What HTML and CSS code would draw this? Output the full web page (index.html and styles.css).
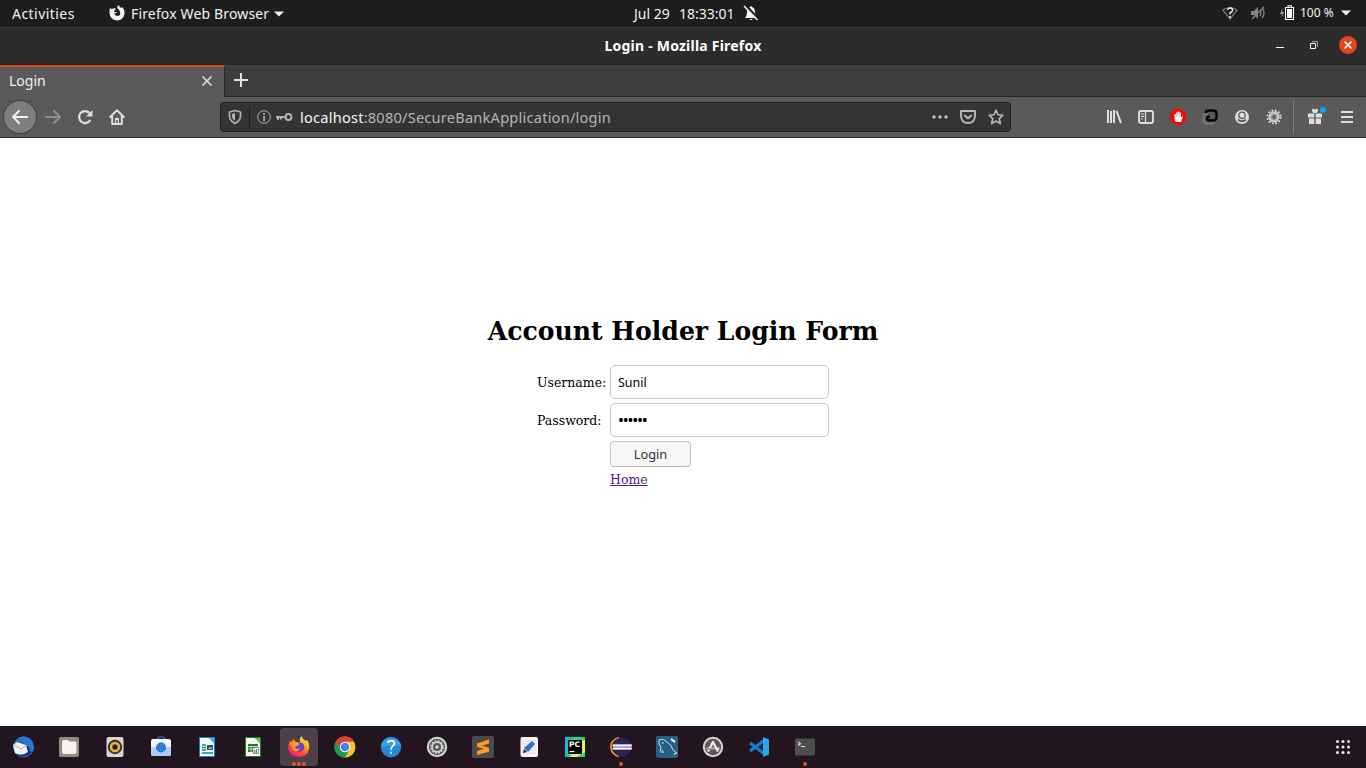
FILE: index.html
```html
<!DOCTYPE html>
<html lang="en">
<head>
<meta charset="utf-8">
<title>Login</title>
<link rel="stylesheet" href="styles.css">
</head>
<body>
<header class="panel">
  <span class="activities">Activities</span>
  <svg class="panel-fox" width="16" height="16" viewBox="0 0 16 16"><path fill="#f2f2f2" fill-rule="evenodd" d="M1 3Q3 5 5 3L7 4Q5 5 5 7H8Q7 9 5 8Q6 11 9 11Q12 10 11 7Q10 4 8 3Q8 1 10 0Q10 2 12 3L13 2Q16 5 15.500 9Q14 15.500 8 15.500Q1 15 .500 8Q.300 5 1 3Z"/></svg>
  <span class="app-name">Firefox Web Browser</span>
  <svg class="caret" width="10" height="6" viewBox="0 0 10 6"><path fill="#f2f2f2" d="M0 .5h10L5 5.500Z"/></svg>
  <div class="clock"><span class="date">Jul 29</span><span class="time">18:33:01</span></div>
  <svg class="bell" width="16" height="16" viewBox="0 0 16 16"><path fill="#f2f2f2" d="M2 13q2-2 2-6Q4 3 7 2q1-2 2 0q3 1 3 5q0 4 2 6ZM6 14h4q-2 2-4 0"/><path stroke="#1d1d1d" stroke-width="3" d="M2 0l14 15"/><path stroke="#f2f2f2" stroke-width="1.600" d="M1 1l13.500 14"/></svg>
  <div class="status">
    <svg class="wifi" width="16" height="16" viewBox="0 0 16 16"><path fill="none" stroke="#858585" stroke-width="1.200" d="M1 5q7-5 14 0L8 14Z"/><path fill="none" stroke="#eee" stroke-width="1.500" d="M5.500 5Q6 3 8 3q3 0 2.500 2.500Q10 7 8 8v1.500M8 11v2"/></svg>
    <svg class="mute" width="16" height="16" viewBox="0 0 16 16"><path fill="#858585" d="M1 6h3l4-4v12l-4-4H1Z"/><path fill="none" stroke="#858585" stroke-width="1.300" d="M2 14L14 2M10 5q2 3 0 6M12 3q4 5 0 10"/></svg>
    <svg class="battery" width="16" height="16" viewBox="0 0 16 16"><path fill="#999" d="M3.500 3L1 9h2l-.5 4L5 7H3.200Z"/><path fill="none" stroke="#fff" stroke-width="1.100" d="M6.500 2.500h8v12h-8ZM9 2V.7h3.500V2"/><path fill="#fff" d="M8 4h5v9H8Z"/></svg>
    <span class="percent">100 %</span>
    <svg width="10" height="6" viewBox="0 0 10 6"><path fill="#f2f2f2" d="M0 .5h10L5 5.500Z"/></svg>
  </div>
</header>
<div class="titlebar">
  <span class="window-title">Login - Mozilla Firefox</span>
  <div class="window-buttons">
    <svg width="8" height="10" viewBox="0 0 8 10"><path fill="#fff" d="M0 7h8v1H0Z"/></svg>
    <svg width="8" height="8" viewBox="0 0 8 8"><path fill="none" stroke="#fff" d="M.5 2.500h5v5h-5Z"/><path fill="none" stroke="#999" d="M2 .5h5.500V6"/></svg>
    <svg width="18" height="18" viewBox="0 0 18 18"><circle cx="9" cy="9" r="9" fill="#e2491a"/><path stroke="#fff" stroke-width="1.700" d="M5.500 5.500l7 7m0-7l-7 7"/></svg>
  </div>
</div>
<div class="tabs">
  <div class="tab"><span class="tab-title">Login</span><svg width="12" height="12" viewBox="0 0 12 12"><path stroke="#dedede" stroke-width="1.600" d="M1.500 1.500l9 9m0-9l-9 9"/></svg></div>
  <svg class="new-tab" width="14" height="14" viewBox="0 0 14 14"><path stroke="#e2e2e2" stroke-width="2" d="M7 0v14M0 7h14"/></svg>
</div>
<nav class="toolbar">
  <div class="nav-buttons">
    <div class="back"><svg width="18" height="16" viewBox="0 0 18 16"><path fill="none" stroke="#f2f2f2" stroke-width="2" stroke-linecap="round" stroke-linejoin="round" d="M8 2L2 8l6 6M2 8h14"/></svg></div>
    <svg class="forward" width="18" height="16" viewBox="0 0 18 16"><path fill="none" stroke="#8d8d8d" stroke-width="2" stroke-linecap="round" stroke-linejoin="round" d="M10 2l6 6-6 6M16 8H2"/></svg>
    <svg class="reload" width="16" height="16" viewBox="0 0 16 16"><path fill="none" stroke="#dedede" stroke-width="2.200" d="M13.300 11A6 6 0 1 1 12.500 4"/><path fill="#dedede" d="M15.500 1v6.500H9Z"/></svg>
    <svg class="home-icon" width="16" height="16" viewBox="0 0 16 16"><path fill="none" stroke="#dedede" stroke-width="2" stroke-linecap="round" stroke-linejoin="round" d="M1.200 8L8 1.200 14.800 8M3.200 7v8h9.600V7"/><path fill="#dedede" d="M6 9h4v6H8.800v-4H7.200v4H6Z"/></svg>
  </div>
  <div class="urlbar">
    <div class="shield"><svg width="14" height="16" viewBox="0 0 14 16"><path fill="none" stroke="#b2b2b2" stroke-width="1.700" stroke-linejoin="round" d="M7 1.500L12.500 3v4.500Q12 12 7 14.500Q2 12 1.500 7.500V3Z"/><path fill="#b2b2b2" d="M7 4v8Q4 10 4 7.500V5Z"/></svg></div>
    <svg class="info" width="14" height="14" viewBox="0 0 14 14"><circle cx="7" cy="7" r="6.300" fill="none" stroke="#b2b2b2"/><path fill="#b2b2b2" d="M6.200 3h1.700v1.700H6.200ZM6.200 6h1.700v5H6.200Z"/></svg>
    <svg class="key" width="18" height="10" viewBox="0 0 18 10"><circle cx="12.500" cy="5" r="2.900" fill="none" stroke="#b2b2b2" stroke-width="2"/><path fill="none" stroke="#b2b2b2" stroke-width="2" d="M0 5h10M2 5v3M5 5v2.500"/></svg>
    <span class="url"><b>localhost</b>:8080/SecureBankApplication/login</span>
    <div class="url-actions">
      <svg width="16" height="16" viewBox="0 0 16 16"><g fill="#b9b9b9"><circle cx="2" cy="8" r="1.800"/><circle cx="8" cy="8" r="1.800"/><circle cx="14" cy="8" r="1.800"/></g></svg>
      <svg width="16" height="16" viewBox="0 0 16 16"><path fill="none" stroke="#b9b9b9" stroke-width="1.900" stroke-linejoin="round" d="M1 2h14v5Q14.500 14 8 14Q1.500 14 1 7Z"/><path fill="none" stroke="#b9b9b9" stroke-width="1.900" stroke-linecap="round" d="M4.800 6.500L8 9.500l3.200-3"/></svg>
      <svg width="16" height="16" viewBox="0 0 16 16"><path fill="none" stroke="#b9b9b9" stroke-width="1.600" stroke-linejoin="round" d="M8 1l2 4.800 5 .4-3.800 3.400 1.200 5L8 12l-4.400 2.600 1.200-5L1 6.200l5-.4Z"/></svg>
    </div>
  </div>
  <div class="extensions">
    <svg width="16" height="16" viewBox="0 0 16 16"><path stroke="#dedede" stroke-width="2" d="M2 1v13M5 2v12M8 1v13M10.500 2l4.500 12"/></svg>
    <svg width="16" height="16" viewBox="0 0 16 16"><rect x="1" y="2" width="14" height="12" rx="2" fill="none" stroke="#dedede" stroke-width="1.900"/><path stroke="#dedede" stroke-width="1.200" d="M7.500 2v12M3 5h3M3 7.500h3M3 10h2"/></svg>
    <svg width="16" height="16" viewBox="0 0 16 16"><path fill="#e80c0c" d="M4.700 0h6.600L16 4.700v6.600L11.300 16H4.700L0 11.300V4.700Z"/><path fill="#fff" d="M4.500 5h1.300v3h.4V3.500h1.300V8h.3V2.500h1.400V8h.3V3.500h1.300v5L12.500 7v2L11 13H6.500Q4.300 12 4.500 9Z"/></svg>
    <svg width="16" height="16" viewBox="0 0 16 16"><path fill="none" stroke="#747476" stroke-width="2.500" d="M6 5H4Q1.500 5 1.500 8v3q0 3.500 3 3.500h4q3 0 3-2"/><path fill="none" stroke="#000" stroke-width="2.300" d="M3.500 4Q4 1.500 7 1.500h4q3.500 0 3.500 3.500v3Q14.500 11.500 11 11.500H8Q5 11.500 5 9.500 5 7.500 8 7.500"/></svg>
    <svg width="16" height="16" viewBox="0 0 16 16"><circle cx="8" cy="8" r="7" fill="#dedede"/><circle cx="8" cy="6.300" r="3.200" fill="none" stroke="#5a5a5a" stroke-width="1.300"/><path fill="none" stroke="#5a5a5a" stroke-width="1.700" d="M4 10.500Q8 14 12 10.500"/></svg>
    <svg width="16" height="16" viewBox="0 0 16 16"><circle cx="8" cy="8.500" r="7" fill="#3a3a3a"/><circle cx="8" cy="8" r="6.500" fill="none" stroke="#d6d6d6" stroke-width="2" stroke-dasharray="2 1.400"/><circle cx="8" cy="8" r="5.700" fill="#c6c6c6"/><circle cx="8" cy="8" r="3" fill="#8b8b8b"/><circle cx="8" cy="8" r="1.500" fill="#555"/></svg>
    <i class="separator"></i>
    <svg class="gift" width="20" height="20" viewBox="0 0 20 20"><path fill="#dedede" d="M1 6.500h6.300v4H1ZM8.700 6.500H15v4H8.700ZM2 11.500h5.300V17H2ZM8.700 11.500H14V17H8.700Z"/><path fill="none" stroke="#dedede" stroke-width="1.600" d="M8 5.500Q5 4.500 6 2.500q2 0 2 3Q8 2.500 10 2.500 11 4.500 8 5.500"/><circle cx="16" cy="3" r="3" fill="#00a9ee"/></svg>
    <svg class="menu" width="12" height="14" viewBox="0 0 12 14"><path stroke="#dedede" stroke-width="2" d="M0 2h12M0 7h12M0 12h12"/></svg>
  </div>
</nav>
<main class="page">
  <h1 class="heading">Account Holder Login Form</h1>
  <form class="form">
    <label class="label" for="user">Username:</label><input class="field" id="user" type="text" value="Sunil">
    <label class="label" for="pass">Password:</label><div class="field dots" id="pass">••••••</div>
    <button class="login" type="button">Login</button>
    <a class="home-link" href="#">Home</a>
  </form>
</main>
<footer class="dock">
  <div class="app"><svg viewBox="0 0 22 22"><circle cx="11.500" cy="11" r="10.500" fill="#1d60b5"/><path fill="#3d9be0" d="M7 4Q12-1 18 4q5 5 3 11Q17 5 7 4"/><path fill="#122b63" d="M2 16q8 8 17 1L15 9Z"/><path fill="#f4f4f6" d="M1 9l4-3 9 3 2 7q-6 5-13 1Z"/><path fill="none" stroke="#a9adb8" d="M2 9l7 4 6-4"/><path fill="#2a77cc" d="M4 6Q9 3 17 11l3 5Q24 5 15 1 7-1 4 6"/></svg></div>
  <div class="app"><svg viewBox="0 0 22 22"><rect x="1" y="1" width="20" height="20" rx="2" fill="#938b7b"/><path fill="#f4f3ef" d="M4 6q0-2 2-2h4l1.500 1.500H17q1.500 0 1.500 2V16q0 2-2 2H6q-2 0-2-2Z"/></svg></div>
  <div class="app"><svg viewBox="0 0 22 22"><rect x="2.500" y="1" width="17" height="20" rx="2" fill="#d8d5cd"/><circle cx="11" cy="11" r="7.200" fill="#303036"/><circle cx="11" cy="11" r="4" fill="none" stroke="#f0b72e" stroke-width="2.500"/><circle cx="11" cy="11" r="1.700" fill="#161616"/></svg></div>
  <div class="app"><svg viewBox="0 0 22 22"><path fill="none" stroke="#2f5ec0" stroke-width="1.500" d="M7 4q0-3 4-3t4 3"/><rect x="1" y="3" width="20" height="17" rx="2" fill="#f3f5fc"/><path fill="#b6c8f7" d="M1 11h20v7q0 2-2 2H3q-2 0-2-2Z"/><circle cx="11" cy="11.500" r="5" fill="#1876d2"/><path stroke="#79b6ef" stroke-width="1" stroke-dasharray="1 1.500" d="M7.500 9h7M7 11.500h8M7.500 14h7"/></svg></div>
  <div class="app"><svg viewBox="0 0 22 22"><path fill="#1888be" d="M3 1h16v20H3Z"/><path fill="#f8f9fa" d="M4 2h9l5 5v13H4Z"/><path fill="#44b6de" d="M13 2l5 5V2Z"/><path stroke="#177db2" stroke-width="1.400" d="M6 9h4M6 11.500h4M6 14h4M6 17h11"/><path fill="#22516e" d="M11 9h6v5h-6Z"/><path fill="#8fc7dd" d="M12 13l1.500-2 1 1 1-1 1 2Z"/></svg></div>
  <div class="app"><svg viewBox="0 0 22 22"><path fill="#18820b" d="M3 1h16v20H3Z"/><path fill="#fafafa" d="M4 2h9l5 5v13H4Z"/><path fill="#6bc73d" d="M13 2l5 5V2Z"/><path fill="#277b20" d="M6 8h10v8H6Z"/><path stroke="#d5ecd2" stroke-width=".8" d="M6 10.500h10M6 13h9M9 10v6"/><path fill="#fff" stroke="#777" stroke-width=".8" d="M11 11.500h5.500v6H11Z"/><path stroke="#c45b52" stroke-width="1.200" d="M12.800 17v-3"/><path stroke="#347dc8" stroke-width="1.200" d="M14.500 17v-4"/></svg></div>
  <div class="app active"><svg viewBox="0 0 22 22">
    <defs><linearGradient id="flame" x1=".8" y1="0" x2=".3" y2="1"><stop offset="0" stop-color="#fff044"/><stop offset=".4" stop-color="#ffaa16"/><stop offset=".7" stop-color="#ff493b"/><stop offset="1" stop-color="#e91b75"/></linearGradient></defs>
    <path fill="url(#flame)" d="M2 5l2 1 1-3 3 3h4q-1-4 2-6 0 3 4 5l1-1q3 4 2 9-2 8-10 8Q2 21 .500 13 0 8 2 5Z"/><circle cx="11.500" cy="11" r="4.800" fill="#6b45c7"/><path fill="#ff982c" d="M3 6q5-1 9 2l-3 2q-2 0-2 2 3 2 5 0-1 4-5 3-4-2-4-9Z"/></svg><i class="marks"><b></b><b></b><b></b></i></div>
  <div class="app"><svg viewBox="0 0 22 22"><circle cx="11" cy="11" r="10.500" fill="#fbc52c"/><path fill="#df4136" d="M1.900 5.700A10.500 10.500 0 0 1 20.100 5.700H11L6.500 13.600Z"/><path fill="#1b994f" d="M1.900 5.700L6.500 13.600 11 16.200 15.500 13.600 11 21.500A10.500 10.500 0 0 1 1.900 5.700"/><circle cx="11" cy="11" r="5.200" fill="#fff"/><circle cx="11" cy="11" r="4.200" fill="#3f83ee"/></svg></div>
  <div class="app"><svg viewBox="0 0 22 22"><circle cx="11" cy="11" r="10.300" fill="#2589cf"/><path fill="#3ca0df" d="M1 10A10.300 10.300 0 0 1 21 10Z"/><path fill="none" stroke="#fff" stroke-width="1.700" d="M7.800 7Q8 4.700 11 4.700q3.500 0 3.500 2.800 0 1.500-2 2.800Q11 11.500 11 14M11 15.800v2"/></svg></div>
  <div class="app"><svg viewBox="0 0 22 22"><circle cx="11" cy="11" r="9.200" fill="#595959" stroke="#d7d7d3" stroke-width="2"/><circle cx="11" cy="11" r="6" fill="none" stroke="#d6d6d2" stroke-width="1.600" stroke-dasharray="1.900 1.240"/><circle cx="11" cy="11" r="4.800" fill="none" stroke="#d6d6d2" stroke-width="1.500"/><circle cx="11" cy="11" r="1.800" fill="#d6d6d2"/></svg></div>
  <div class="app"><svg viewBox="0 0 22 22"><rect width="22" height="22" rx="1.500" fill="#4b4b4b"/><path fill="#ff9b20" d="M5 7.500L17 3.500v4L10 9.800l7 2v4L5 19v-4l7-2.300-7-2Z"/></svg></div>
  <div class="app"><svg viewBox="0 0 22 22"><rect x="2.500" y="1" width="17.500" height="20" rx="2" fill="#f5f5f5"/><path stroke="#ddd" d="M4 5h14M4 8h14M4 11h14M4 14h14M4 17h14"/><path fill="#376ad4" d="M14 5l3 3-7 8-4-4Z"/><path fill="#222" d="M6 13l-1 4 4-1Z"/></svg></div>
  <div class="app"><svg viewBox="0 0 22 22"><path fill="#21d789" d="M1 1h20v20H1Z"/><path fill="#06c5d5" d="M1 1h7L4 21H1Z"/><path fill="#e5f451" d="M14 5l7-1v12l-8 5H6Z"/><path fill="#000" d="M4 4h14v14H4Z"/><text class="pc" x="5" y="11.200">PC</text><path fill="#fff" d="M5.500 15h5v1.200h-5Z"/></svg></div>
  <div class="app"><svg viewBox="0 0 22 22"><path fill="none" stroke="#f59120" stroke-width="1.800" d="M9 1.500Q1 4 1 11t8 9.500"/><circle cx="12" cy="11" r="9.500" fill="#2c2255"/><path fill="#9792b9" d="M3 8h18.700v6H3Z"/><path stroke="#f4f2fa" stroke-width="1.300" d="M2.500 9.500h19.300M2.500 12.500h19.300"/></svg><i class="marks"><b></b></i></div>
  <div class="app"><svg viewBox="0 0 22 22"><rect width="22" height="22" rx="2" fill="#275f86"/><path fill="none" stroke="#d0dde5" stroke-width="1" d="M6 17q-3-3-1-6L3 8V4q5-2 8 2 5 3 6 8l4 3-3 1 1 1M6 14l2 3M7 6q-1 1 0 2"/><path stroke="#fff" stroke-width="2" d="M15 3l4 3"/></svg></div>
  <div class="app"><svg viewBox="0 0 22 22"><circle cx="11" cy="11" r="9.200" fill="#595959" stroke="#d7d7d3" stroke-width="2"/><path fill="none" stroke="#eee" stroke-width="2.300" stroke-linejoin="round" d="M6 15.500L11 6l5 9.500"/><path stroke="#eee" stroke-width="1.800" d="M4.500 12.500h13"/><path stroke="#a9449c" stroke-width="1.200" d="M5 13h8"/></svg></div>
  <div class="app"><svg viewBox="0 0 22 22"><path fill="none" stroke="#0e80cc" stroke-width="3.200" d="M2 7l14 10.500M2 15L16 4.500"/><path fill="#2aa5f0" d="M15 1l6 2.500v15L15 21Z"/></svg></div>
  <div class="app"><svg viewBox="0 0 22 22"><rect x="1" y="2.500" width="20" height="17" rx="1.500" fill="#4e4e4e"/><path fill="none" stroke="#e2e2e2" stroke-width="1.100" d="M4 6l2.500 1.700L4 9.500M7 10.500h4"/></svg><i class="marks"><b></b></i></div>
  <svg class="grid" width="14" height="14" viewBox="0 0 14 14"><g fill="#eee"><circle cx="1.500" cy="1.500" r="1.500"/><circle cx="7" cy="1.500" r="1.500"/><circle cx="12.500" cy="1.500" r="1.500"/><circle cx="1.500" cy="7" r="1.500"/><circle cx="7" cy="7" r="1.500"/><circle cx="12.500" cy="7" r="1.500"/><circle cx="1.500" cy="12.500" r="1.500"/><circle cx="7" cy="12.500" r="1.500"/><circle cx="12.500" cy="12.500" r="1.500"/></g></svg>
</footer>
</body>
</html>
```
FILE: styles.css
```css
* { box-sizing: border-box; }
body { margin: 0; width: 1366px; height: 768px; overflow: hidden; display: flex; flex-direction: column; background: #fff; font-family: "Noto Sans", sans-serif; }
svg { display: block; flex: none; }
span { white-space: nowrap; }
.panel { height: 28px; flex: none; display: flex; align-items: center; background: #1d1d1d; border-bottom: 1px solid #373737; color: #f2f2f2; font-size: 14px; line-height: 26px; }
.activities { width: 97px; padding-left: 12px; letter-spacing: .45px; }
.panel-fox { margin: -2px 0 0 12px; }
.app-name { width: 138px; margin-left: 6px; letter-spacing: .15px; }
.caret { margin-left: 5px; }
.clock { display: flex; margin-left: 350px; width: 109px; }
.date { width: 45px; }
.bell { margin-top: -1px; }
.status { display: flex; align-items: center; margin-left: auto; padding-right: 15px; }
.status svg { margin-top: -1px; }
.mute { margin-left: 12px; }
.battery { margin-left: 13px; }
.percent { width: 34px; margin: -1px 7px 0 5px; font-size: 12px; }
.titlebar { height: 36px; flex: none; display: grid; grid-template-columns: 1fr auto 1fr; align-items: center; background: #2c2c2c; color: #fff; font-weight: 700; font-size: 14px; padding-bottom: 2px; }
.window-title { grid-column: 2; letter-spacing: .22px; }
.window-buttons { display: flex; align-items: center; justify-content: flex-end; gap: 26px; padding-right: 9px; }
.window-buttons svg:last-child { margin-left: -5px; }
.tabs { height: 33px; flex: none; display: flex; background: #3e3e3e; border-top: 1px solid #262626; border-bottom: 1px solid #282828; }
.tab { width: 225px; height: 33px; display: flex; align-items: center; justify-content: space-between; padding: 0 11px 4px 9px; background: #5a5a5a; border-top: 2px solid #e2491a; border-right: 1px solid #282828; color: #f2f2f2; font-size: 14px; }
.new-tab { margin: 8px 0 0 9px; }
.toolbar { height: 41px; flex: none; display: flex; align-items: center; background: #5a5a5a; border-bottom: 1px solid #282828; }
.nav-buttons { width: 220px; display: flex; align-items: center; padding-left: 3px; }
.back { width: 34px; height: 34px; display: grid; place-items: center; border-radius: 50%; border: 1px solid #3c3c3c; background: #7e7e7e; }
.forward { margin-left: 7px; }
.reload { margin-left: 15px; }
.home-icon { margin-left: 16px; }
.urlbar { width: 791px; height: 30px; display: flex; align-items: center; border: 1px solid #222; border-radius: 4px; background: #343434; }
.shield { width: 29px; height: 22px; display: grid; place-items: center; border-right: 1px solid #202020; }
.info { margin-left: 7px; }
.key { margin-left: 5px; }
.url { margin-left: 6px; color: #b4b4b4; font-size: 14.600px; letter-spacing: .22px; }
.url b { font-weight: 400; color: #f4f4f4; }
.url-actions { display: flex; gap: 12px; margin-left: auto; padding-right: 6px; }
.extensions { flex: 1; display: flex; align-items: center; gap: 16px; padding-left: 95px; }
.separator { width: 1px; height: 34px; margin-left: -5px; background: #7c7c7c; }
.gift { margin: 0 -4px 0 -3px; }
.menu { margin-left: 2px; }
.page { flex: 1; display: flex; flex-direction: column; align-items: center; padding-top: 176px; font-family: "DejaVu Serif", serif; color: #000; }
.heading { margin: 0; height: 51px; font-size: 25.100px; line-height: 34px; white-space: nowrap; }
.form { width: 292px; display: grid; grid-template-columns: 69px 219px; column-gap: 4px; row-gap: 4px; align-items: center; font-size: 12.500px; }
.label { white-space: nowrap; }
.field { width: 219px; height: 34px; padding: 0 7px; border: 1px solid #cbc6c1; border-radius: 5px; background: #fff; color: #000; font: 12.500px "Noto Sans", sans-serif; outline: 0; }
.dots { font-size: 16px; line-height: 32px; letter-spacing: -1.250px; }
.login { grid-column: 2; width: 81px; height: 26px; padding: 0; border: 1px solid #c9c4bd; border-bottom-color: #b9b3ab; border-radius: 4px; background: #f7f7f6; color: #2e3436; font: 12.800px "Noto Sans", sans-serif; }
.home-link { grid-column: 2; justify-self: start; color: #551a8b; line-height: 17px; }
.dock { height: 42px; flex: none; display: flex; align-items: center; background: #23151f; }
.app { position: relative; width: 38px; height: 38px; margin: 0 4px; display: grid; place-items: center; border-radius: 4px; }
.app svg { width: 22px; height: 22px; }
.active { background: #4d4149; }
.marks { position: absolute; bottom: 0; left: 0; right: 0; display: flex; justify-content: center; gap: 1px; }
.marks b { width: 4px; height: 4px; border-radius: 50%; background: #e9541f; }
.pc { font: 700 7.500px "DejaVu Sans", sans-serif; fill: #fff; }
.grid { margin: 0 16px 0 auto; }
```
